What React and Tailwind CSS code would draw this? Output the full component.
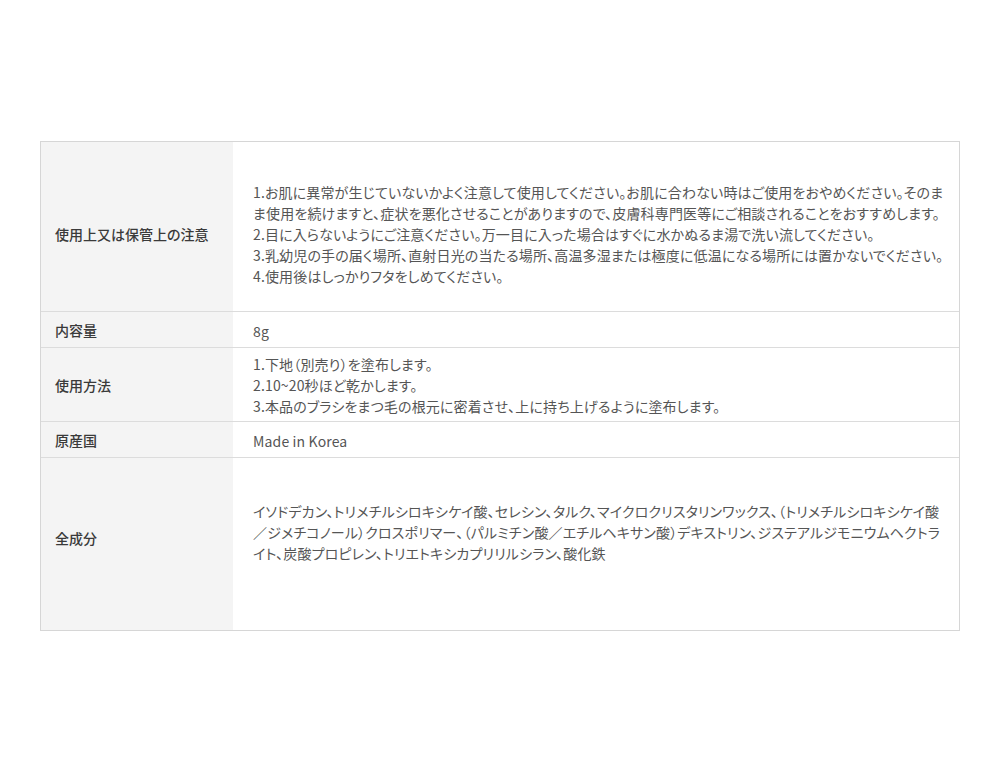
import React from 'react';

const rows = [
    {
        label: '使用上又は保管上の注意',
        labelPad: 'pt-[16px]',
        bodyPad: 'pt-[40px] pb-[24px]',
        lines: [
            '1.お肌に異常が生じていないかよく注意して使用してください。お肌に合わない時はご使用をおやめください。そのまま使用を続けますと、症状を悪化させることがありますので、皮膚科専門医等にご相談されることをおすすめします。',
            '2.目に入らないようにご注意ください。万一目に入った場合はすぐに水かぬるま湯で洗い流してください。',
            '3.乳幼児の手の届く場所、直射日光の当たる場所、高温多湿または極度に低温になる場所には置かないでください。',
            '4.使用後はしっかりフタをしめてください。',
        ],
    },
    {
        label: '内容量',
        labelPad: 'pt-[2px]',
        bodyPad: 'pt-[9px] pb-[5px]',
        lines: ['8g'],
    },
    {
        label: '使用方法',
        labelPad: 'pt-[2px]',
        bodyPad: 'pt-[6px] pb-[4px]',
        lines: [
            '1.下地（別売り）を塗布します。',
            '2.10~20秒ほど乾かします。',
            '3.本品のブラシをまつ毛の根元に密着させ、上に持ち上げるように塗布します。',
        ],
    },
    {
        label: '原産国',
        labelPad: 'pt-[2px]',
        bodyPad: 'pt-[9px] pb-[5px]',
        lines: ['Made in Korea'],
    },
    {
        label: '全成分',
        labelPad: 'pb-[11px]',
        bodyPad: 'pt-[43px] pb-[66px]',
        lines: [
            'イソドデカン、トリメチルシロキシケイ酸、セレシン、タルク、マイクロクリスタリンワックス、（トリメチルシロキシケイ酸／ジメチコノール）クロスポリマー、（パルミチン酸／エチルヘキサン酸）デキストリン、ジステアルジモニウムヘクトライト、炭酸プロピレン、トリエトキシカプリリルシラン、酸化鉄',
        ],
    },
];

export default function App() {
    return (
        <div
            className="w-[1000px] h-[772px] bg-white pt-[141px] px-[40px]"
            style={{ fontFamily: '"Noto Sans CJK JP", "Noto Sans", sans-serif' }}
        >
            <div className="border border-[#d6d6d6] [font-feature-settings:'palt']">
                {rows.map((row, i) => (
                    <div
                        key={row.label}
                        className={`flex ${i > 0 ? 'border-t border-[#dcdcdc]' : ''}`}
                    >
                        <div className={`w-[192px] shrink-0 bg-[#f4f4f4] pl-[14px] flex items-center ${row.labelPad}`}>
                            <span className="text-[14px] leading-[21px] font-medium text-[#3a3a3a]">
                                {row.label}
                            </span>
                        </div>
                        <div className={`flex-1 pl-[20px] pr-[14px] text-[14px] leading-[21px] tracking-[0.15px] text-[#555] ${row.bodyPad}`}>
                            {row.lines.map((line) => (
                                <p key={line}>{line}</p>
                            ))}
                        </div>
                    </div>
                ))}
            </div>
        </div>
    );
}
